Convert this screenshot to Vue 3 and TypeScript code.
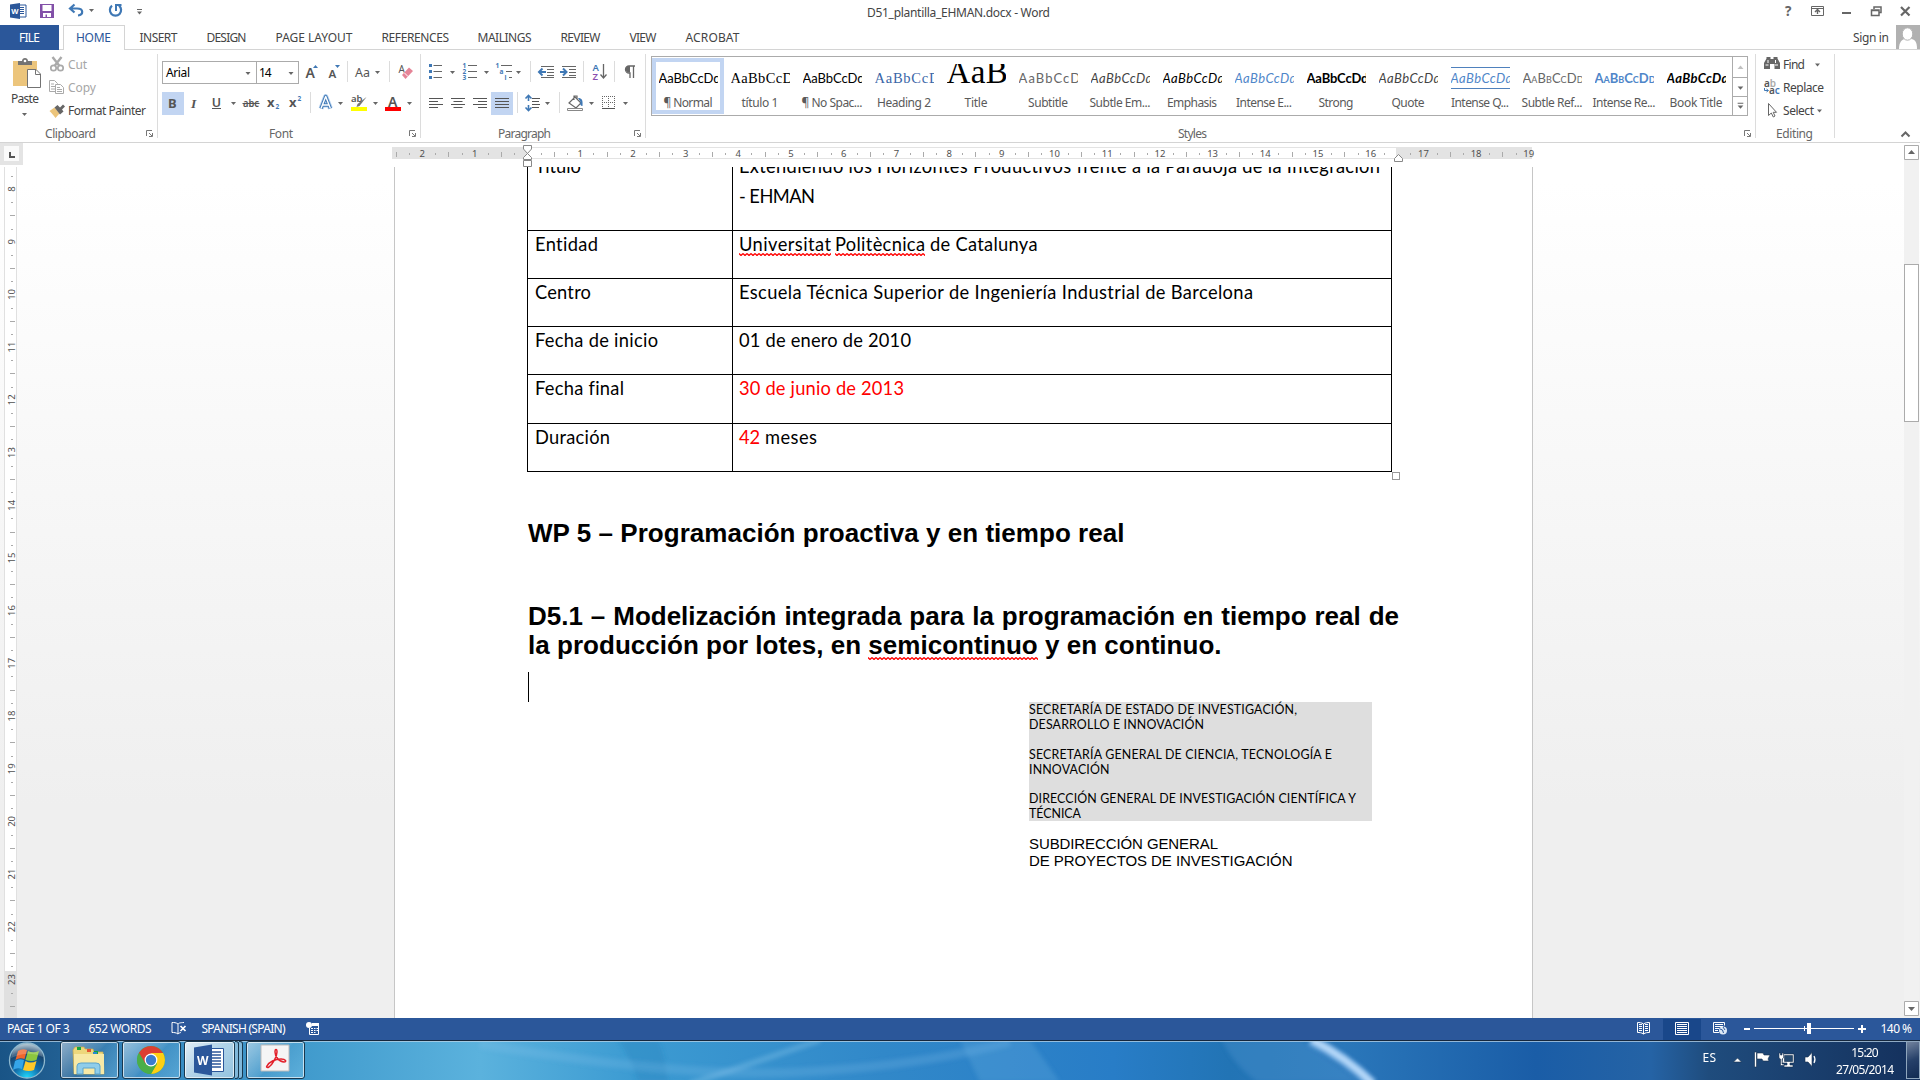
<script setup lang="ts">
import type { Directive } from 'vue'

interface Segment { text: string; width: number; gap?: number; red?: boolean; wavy?: boolean }
interface Row { label: string; width: number; lines: Segment[][]; height: number }
interface StyleItem { sample: string; name: string; kind: string; sampleWidth: number; nameWidth: number }

/* Spreads the letters of a label so that it takes exactly the given width. */
const fit = (el: HTMLElement, width: number) => {
  const natural = el.getBoundingClientRect().width
  const count = Math.max(1, (el.textContent ?? '').length - 1)
  el.style.letterSpacing = `${(width - natural) / count}px`
  el.style.width = `${width}px`
}
const vFit: Directive<HTMLElement, number> = { mounted: (el, b) => fit(el, b.value) }

const box = (x: number, y: number, w: number, h: number) => ({ viewBox: `${x} ${y} ${w} ${h}`, width: w, height: h })
const tri = (x: number, y: number) => `M${x - 2.5} ${y - 1}h5l-2.5 3z`

const tabs = [
  { name: 'INSERT', gap: 14.5, width: 38 },
  { name: 'DESIGN', gap: 29, width: 40 },
  { name: 'PAGE LAYOUT', gap: 29, width: 77 },
  { name: 'REFERENCES', gap: 29, width: 67.5 },
  { name: 'MAILINGS', gap: 28.5, width: 54 },
  { name: 'REVIEW', gap: 29, width: 40 },
  { name: 'VIEW', gap: 29, width: 27 },
  { name: 'ACROBAT', gap: 29, width: 54 },
]

const styles: StyleItem[] = [
  { sample: 'AaBbCcDd', name: '¶ Normal', kind: 'plain', sampleWidth: 62, nameWidth: 49 },
  { sample: 'AaBbCcDd', name: 'título 1', kind: 'serif', sampleWidth: 70, nameWidth: 37 },
  { sample: 'AaBbCcDd', name: '¶ No Spac...', kind: 'plain', sampleWidth: 62, nameWidth: 61 },
  { sample: 'AaBbCcDd', name: 'Heading 2', kind: 'heading', sampleWidth: 73, nameWidth: 54 },
  { sample: 'AaBb', name: 'Title', kind: 'title', sampleWidth: 78, nameWidth: 23 },
  { sample: 'AaBbCcDd', name: 'Subtitle', kind: 'subtitle', sampleWidth: 70, nameWidth: 40 },
  { sample: 'AaBbCcDd', name: 'Subtle Em...', kind: 'subtle-em', sampleWidth: 62, nameWidth: 61 },
  { sample: 'AaBbCcDd', name: 'Emphasis', kind: 'emphasis', sampleWidth: 62, nameWidth: 50 },
  { sample: 'AaBbCcDd', name: 'Intense E...', kind: 'intense-em', sampleWidth: 62, nameWidth: 56 },
  { sample: 'AaBbCcDd', name: 'Strong', kind: 'strong', sampleWidth: 62, nameWidth: 35 },
  { sample: 'AaBbCcDd', name: 'Quote', kind: 'quote', sampleWidth: 62, nameWidth: 33 },
  { sample: 'AaBbCcDd', name: 'Intense Q...', kind: 'intense-quote', sampleWidth: 62, nameWidth: 58 },
  { sample: 'AaBbCcDd', name: 'Subtle Ref...', kind: 'subtle-ref', sampleWidth: 61, nameWidth: 61 },
  { sample: 'AaBbCcDd', name: 'Intense Re...', kind: 'intense-ref', sampleWidth: 61, nameWidth: 63 },
  { sample: 'AaBbCcDd', name: 'Book Title', kind: 'book', sampleWidth: 62, nameWidth: 53 },
]

const rows: Row[] = [
  {
    label: 'Título', width: 46, height: 80,
    lines: [
      [{ text: 'Extendiendo los Horizontes Productivos frente a la Paradoja de la Integración', width: 641 }],
      [{ text: '- EHMAN', width: 76 }],
    ],
  },
  {
    label: 'Entidad', width: 63, height: 47,
    lines: [[
      { text: 'Universitat', width: 92, wavy: true },
      { text: 'Politècnica', width: 90, gap: 4, wavy: true },
      { text: 'de Catalunya', width: 107.5, gap: 5 },
    ]],
  },
  { label: 'Centro', width: 56, height: 47, lines: [[{ text: 'Escuela Técnica Superior de Ingeniería Industrial de Barcelona', width: 514 }]] },
  { label: 'Fecha de inicio', width: 123, height: 47, lines: [[{ text: '01 de enero de 2010', width: 172 }]] },
  { label: 'Fecha final', width: 89, height: 48, lines: [[{ text: '30 de junio de 2013', width: 165, red: true }]] },
  { label: 'Duración', width: 75, height: 47, lines: [[{ text: '42', width: 21, red: true }, { text: 'meses', width: 52, gap: 5 }]] },
]

const office = [
  { text: 'SECRETARÍA DE ESTADO DE INVESTIGACIÓN,', width: 268 },
  { text: 'DESARROLLO E INNOVACIÓN', width: 175 },
  { text: '', width: 0 },
  { text: 'SECRETARÍA GENERAL DE CIENCIA, TECNOLOGÍA E', width: 303 },
  { text: 'INNOVACIÓN', width: 80.5 },
  { text: '', width: 0 },
  { text: 'DIRECCIÓN GENERAL DE INVESTIGACIÓN CIENTÍFICA Y', width: 327 },
  { text: 'TÉCNICA', width: 52 },
]

const CM = 52.7
const hMarks = Array.from({ length: 87 }, (_, i) => i - 10)
  .filter((q) => q !== 0 && q !== 66)
  .map((q) => ({ q, x: 527.5 + (q * CM) / 4, label: q % 4 === 0 ? String(Math.abs(q / 4)) : '' }))
const vMarks = Array.from({ length: 64 }, (_, i) => i - 1)
  .map((q) => ({ q, y: 189 + (q * CM) / 4, label: q % 4 === 0 ? String(8 + q / 4) : '' }))
</script>

<template>
  <div class="word">
    <header class="titlebar">
      <svg v-bind="box(0, 0, 160, 25)">
        <path d="M18 5h8v12h-8z" fill="#fff" stroke="#2b579a" />
        <path d="M19 7.500h5M19 9.500h5M19 11.500h5M19 13.500h5" stroke="#2b579a" />
        <path d="M10 4.500 20 3v16l-10-1.500z" fill="#2b579a" />
        <text x="11.300" y="14" class="b" font-size="7.500" fill="#fff">W</text>
        <path d="M40 4h14v14H40z" fill="#8250a8" />
        <path d="M42.500 5h9v6h-9zM43 13h8v4h-4v-2.500h-1.500V17H43z" fill="#fff" />
        <path d="M70 8.500h7c7 0 6.500 6.500 1 7M74.500 4.500 70 8.500l4.500 4" fill="none" stroke="#3f78b5" stroke-width="2.200" />
        <path :d="tri(91.5, 10)" fill="#666" />
        <path d="M112 5.700a5.600 5.600 0 1 0 7 0" fill="none" stroke="#3f78b5" stroke-width="2.200" />
        <path d="M115 4h6.500v2H117v5h-2z" fill="#3f78b5" />
        <path d="M137 9.500h5" stroke="#666" /><path :d="tri(139.5, 12.5)" fill="#666" />
      </svg>
      <span v-fit="183" class="doc-name">D51_plantilla_EHMAN.docx - Word</span>
      <svg v-bind="box(1780, 0, 140, 25)" fill="none" stroke="#666">
        <text x="1785" y="16" class="b" font-size="13.500" fill="#666" stroke="none">?</text>
        <path d="M1811.500 6.500h12v9h-12zM1811.500 8.500h12" /><path d="M1817.500 14v-4M1815 12l2.500-2.500 2.500 2.500" stroke-width="1.400" />
        <path d="M1842 13h9" stroke-width="2" />
        <path d="M1874 9V7h7v5.500h-2M1871.500 10h7.500v5.500h-7.500zM1871.500 10.500h7.500" stroke-width="1.500" />
        <path d="m1901 7 8.500 8.500M1909.500 7l-8.500 8.500" stroke-width="2.200" />
      </svg>
    </header>

    <nav class="tabs">
      <div class="file"><span v-fit="21">FILE</span></div>
      <div class="home"><span v-fit="35">HOME</span></div>
      <span v-for="t in tabs" :key="t.name" v-fit="t.width" :style="{ marginLeft: t.gap + 'px' }">{{ t.name }}</span>
      <span v-fit="36" class="sign-in">Sign in</span>
      <svg v-bind="box(1896, 25, 24, 24)">
        <path d="M1896 25h24v24h-24z" fill="#b1b1b1" />
        <path d="M1899 49c0-7 3-9.500 6-10h6c4 .5 6 3 6 10z" fill="#fff" />
        <ellipse cx="1907.500" cy="34" rx="5.300" ry="6.200" fill="#fff" stroke="#b1b1b1" />
      </svg>
    </nav>

    <section class="ribbon">
      <div class="group clipboard">
        <div class="body">
          <div class="paste">
            <svg v-bind="box(0, 52, 48, 38)">
              <path d="M13 61h24v25H13z" fill="#ecc57c" />
              <path d="M18 65v-4h4c0-4 6-4 6 0h4v4z" fill="#737373" /><circle cx="25" cy="61" r="1.300" fill="#fff" />
              <path d="M27.500 69.500H36l4.500 4.500v13.500h-13z" fill="#fff" stroke="#737373" /><path d="M35.500 69.500v5h5" fill="none" stroke="#737373" />
            </svg>
            <span v-fit="28">Paste</span>
            <svg v-bind="box(0, 108, 48, 12)"><path :d="tri(24.5, 114)" fill="#666" /></svg>
          </div>
          <div class="stack">
            <div class="off">
              <svg v-bind="box(48, 54, 20, 22)" fill="none" stroke="#aaa" stroke-width="1.700"><path d="m52.500 57 7 9M61.500 57l-7 9" stroke-width="2.400" /><circle cx="53.500" cy="68" r="2.700" /><circle cx="60.500" cy="68" r="2.700" /></svg>
              <span v-fit="19">Cut</span>
            </div>
            <div class="off">
              <svg v-bind="box(48, 77, 20, 22)" fill="#fff" stroke="#aaa"><path d="M49.500 80.500h5l3 3v8h-8zM51 84h3M51 86.500h5M51 89h5" /><path d="M55.500 84.500h5l3 3v6h-8zM57 87.500h3M57 89.500h5M57 91.500h5" /></svg>
              <span v-fit="28">Copy</span>
            </div>
            <div>
              <svg v-bind="box(48, 99, 20, 22)"><path d="m49.500 110 5-3.500 5 6-4 4.500c-2-3-4-5-6-7z" fill="#ecc57c" /><path d="m54.500 106.500 3-2.500 2.500 2.500 3-3 2 2-3 3 1.500 2-3.500 3z" fill="#666" /></svg>
              <span v-fit="78">Format Painter</span>
            </div>
          </div>
        </div>
        <footer><span v-fit="51" style="margin-left: 45px">Clipboard</span><svg class="launch" v-bind="box(0, 0, 8, 8)"><path d="M.5 6V.5H6M3 3l3 3M6.500 3v3.500H3" fill="none" stroke="#777" /></svg></footer>
      </div>

      <div class="group font">
        <div class="line first">
          <div class="combo family"><span v-fit="24">Arial</span><svg v-bind="box(243, 61, 11, 20)"><path :d="tri(248, 72)" fill="#666" /></svg></div>
          <div class="combo size"><span v-fit="12.5">14</span><svg v-bind="box(286, 61, 11, 20)"><path :d="tri(291, 72)" fill="#666" /></svg></div>
          <svg v-bind="box(299, 61, 24, 23)"><text x="305.500" y="78" font-size="14" class="m">A</text><path d="m313 68 2.500-3 2.500 3z" fill="#3f78b5" /></svg>
          <svg v-bind="box(323, 61, 24, 23)"><text x="328.500" y="78" font-size="11.500" class="m">A</text><path d="M335 65h5l-2.500 3z" fill="#3f78b5" /></svg>
          <i class="sep" />
          <svg v-bind="box(348, 61, 41, 23)"><text x="355" y="76.500" font-size="13" textLength="15" lengthAdjust="spacingAndGlyphs">Aa</text><path :d="tri(377.5, 72)" fill="#666" /></svg>
          <i class="sep" />
          <svg v-bind="box(390, 61, 28, 23)"><text x="398.500" y="73" font-size="10">A</text><path d="m401.500 73 3 4M402 75l7-7.500 4 3.500-7.500 8z" fill="#e58497" /><path d="m404 72.500 4 4" stroke="#fff" /></svg>
        </div>
        <div class="line second">
          <svg class="on" v-bind="box(162, 92, 22, 23)"><text x="168" y="107.500" font-size="13" class="b">B</text></svg>
          <svg v-bind="box(184, 92, 22, 23)"><text x="191" y="107.500" font-size="13.500" font-style="italic" font-weight="700" font-family="Liberation Serif, serif">I</text></svg>
          <svg v-bind="box(206, 92, 35, 23)"><text x="211.800" y="106.500" font-size="12.500" class="m">U</text><path d="M212 108.500h9" stroke="#555" /><path :d="tri(233.5, 103)" fill="#666" /></svg>
          <svg v-bind="box(241, 92, 22, 23)"><text x="243" y="107" font-size="11" class="m" textLength="16" lengthAdjust="spacingAndGlyphs">abc</text><path d="M242.500 103.500h17" stroke="#555" /></svg>
          <svg v-bind="box(263, 92, 22, 23)"><text x="267" y="107" font-size="13" class="b">x</text><text x="275.500" y="109" font-size="6.500" class="blue b">2</text></svg>
          <svg v-bind="box(285, 92, 25, 23)"><text x="289" y="107" font-size="13" class="b">x</text><text x="297.500" y="101" font-size="6.500" class="blue b">2</text></svg>
          <i class="sep" />
          <svg v-bind="box(311, 92, 36, 23)" stroke-linejoin="round" fill="none"><path d="m321 108.500 4.700-12 4.700 12M322.700 105h6" stroke="#b7d2ef" stroke-width="5" /><path d="m321 108.500 4.700-12 4.700 12M322.700 105h6" stroke="#3f78b5" stroke-width="3.400" /><path d="m321 108.500 4.700-12 4.700 12M322.700 105h6" stroke="#fff" stroke-width="1.400" /><path :d="tri(340.5, 103)" fill="#666" /></svg>
          <svg v-bind="box(347, 92, 35, 23)"><text x="351" y="101.500" font-size="9.500" class="m">ab</text><path d="m366.500 97-7 9-3 1 1-3z" fill="#777" /><path d="M351 107h16v4h-16z" fill="#ff0" /><path :d="tri(375.500, 103)" fill="#666" /></svg>
          <svg v-bind="box(382, 92, 36, 23)"><text x="388" y="106.500" font-size="14" class="m">A</text><path d="M385 107h16v4h-16z" fill="red" /><path :d="tri(409.500, 103)" fill="#666" /></svg>
        </div>
        <footer><span v-fit="24" style="margin-left: 111px">Font</span><svg class="launch" v-bind="box(0, 0, 8, 8)"><path d="M.5 6V.5H6M3 3l3 3M6.500 3v3.500H3" fill="none" stroke="#777" /></svg></footer>
      </div>

      <div class="group paragraph">
        <div class="line first">
          <svg v-bind="box(421, 61, 38, 23)"><path d="M433.500 65.500H442M433.500 71.500H442M433.500 77.500H442" stroke="#666" /><path d="M429 64h3v3h-3zM429 70h3v3h-3zM429 76h3v3h-3z" fill="#3f78b5" /><path :d="tri(452.500, 72)" fill="#666" /></svg>
          <svg v-bind="box(459, 61, 34, 23)"><path d="M468 65.500h9M468 71.500h9M468 77.500h9" stroke="#666" /><g font-size="6.500" class="nums"><text x="462.500" y="68">1</text><text x="462.500" y="74">2</text><text x="462.500" y="80">3</text></g><path :d="tri(486.500, 72)" fill="#666" /></svg>
          <svg v-bind="box(493, 61, 37, 23)"><path d="M501 65.500h11M506 71.500h6M509 77.500h3" stroke="#666" /><g font-size="6.500" class="nums"><text x="495.500" y="68">1</text><text x="499.500" y="74">a</text><text x="504.500" y="80">i</text></g><path :d="tri(518.500, 72)" fill="#666" /></svg>
          <i class="sep" />
          <svg v-bind="box(531, 61, 26, 23)"><path d="M541 66.500h13M547 69.500h7M547 72.500h7M547 75.500h7M541 77.500h13" stroke="#666" /><path d="M546 72h-6M542.500 68.500l-3.500 3.500 3.500 3.500" fill="none" stroke="#3f78b5" stroke-width="2" /></svg>
          <svg v-bind="box(557, 61, 26, 23)"><path d="M562 66.500h14M569 69.500h7M569 72.500h7M569 75.500h7M562 77.500h14" stroke="#666" /><path d="M560 72h6M563 68.500l3.500 3.500-3.500 3.500" fill="none" stroke="#3f78b5" stroke-width="2" /></svg>
          <i class="sep" />
          <svg v-bind="box(584, 61, 30, 23)"><text x="592.500" y="71" font-size="9.500" class="blue m">A</text><text x="592.500" y="79.500" font-size="9.500" class="m" style="fill: #8a4fb0">Z</text><path d="M603.500 64v14M600.500 74.500l3 3.500 3-3.500" fill="none" stroke="#666" stroke-width="1.300" /></svg>
          <i class="sep" />
          <svg v-bind="box(615, 61, 29, 23)"><path d="M635 66h-6a3.500 3.500 0 0 0 0 7h1v5M633.500 66v12" fill="none" stroke="#666" stroke-width="1.300" /><path d="M630 66h-1.500a3.300 3.300 0 0 0 0 6.500h1.500z" fill="#666" /></svg>
        </div>
        <div class="line second">
          <svg v-bind="box(425, 92, 22, 23)" stroke="#555"><path d="M429 98.500h14M429 101.500h9M429 104.500h14M429 107.500h9" /></svg>
          <svg v-bind="box(447, 92, 22, 23)" stroke="#555"><path d="M451 98.500h14M453.500 101.500h9M451 104.500h14M453.500 107.500h9" /></svg>
          <svg v-bind="box(469, 92, 22, 23)" stroke="#555"><path d="M473 98.500h14M478 101.500h9M473 104.500h14M478 107.500h9" /></svg>
          <svg class="on" v-bind="box(491, 92, 22, 23)" stroke="#555"><path d="M495 98.500h14M495 101.500h14M495 104.500h14M495 107.500h14" /></svg>
          <i class="sep gap" />
          <svg v-bind="box(518, 92, 41, 23)"><path d="M532 98.500h8M532 101.500h7M532 104.500h8M532 107.500h7" stroke="#555" /><path d="M528.500 95v6M528.500 105v6M525.500 98.500l3-3 3 3M525.500 107.500l3 3 3-3" fill="none" stroke="#3f78b5" stroke-width="1.600" /><path :d="tri(547.500, 103)" fill="#666" /></svg>
          <i class="sep" />
          <svg v-bind="box(560, 92, 38, 23)"><path d="m569 103 6-6 6 6-5 5zM574 100v-4h3v4" fill="#fff" stroke="#666" stroke-width="1.200" /><path d="M578 98c4 0 5 2 4.500 8-2 0-3-2-2-4z" fill="#3f78b5" /><path d="M567.500 108.500h15v2h-15z" fill="#fff" stroke="#888" /><path :d="tri(591.500, 103)" fill="#666" /></svg>
          <svg v-bind="box(598, 92, 40, 23)"><path d="M602 96.500h13M602 102.500h13M602.500 96v13M608.500 96v13M614.500 96v13" stroke="#666" stroke-dasharray="1 1" /><path d="M602 108.500h13" stroke="#555" /><path :d="tri(625.500, 103)" fill="#666" /></svg>
        </div>
        <footer><span v-fit="53" style="margin-left: 77px">Paragraph</span><svg class="launch" v-bind="box(0, 0, 8, 8)"><path d="M.5 6V.5H6M3 3l3 3M6.500 3v3.500H3" fill="none" stroke="#777" /></svg></footer>
      </div>

      <div class="group styles">
        <div class="gallery">
          <div v-for="(s, i) in styles" :key="s.name" class="style" :class="{ picked: i === 0 }">
            <div class="sample" :class="s.kind"><span v-fit="s.sampleWidth">{{ s.sample }}</span></div>
            <span v-fit="s.nameWidth" class="style-name">{{ s.name }}</span>
          </div>
          <div class="arrows">
            <svg v-bind="box(1733, 57, 14, 20)"><path d="m1737.500 69 3-3.500 3 3.500z" fill="#c0c0c0" /></svg>
            <svg v-bind="box(1733, 77, 14, 19)"><path d="M1737.500 86h6l-3 3.500z" fill="#666" /></svg>
            <svg v-bind="box(1733, 96, 14, 19)"><path d="M1737.500 105h6l-3 3.500zM1737.500 102h6v1h-6z" fill="#666" /></svg>
          </div>
        </div>
        <footer><span v-fit="29" style="margin-left: 532px">Styles</span><svg class="launch" v-bind="box(0, 0, 8, 8)"><path d="M.5 6V.5H6M3 3l3 3M6.500 3v3.500H3" fill="none" stroke="#777" /></svg></footer>
      </div>

      <div class="group editing">
        <div class="stack">
          <div>
            <svg v-bind="box(1756, 54, 26, 22)"><path d="M1763 69v-6l2.500-4.500V57h4v2h3v-2h4v1.500l2.500 4.500v6h-5.500v-5h-4.500v5z" fill="#666" /><path d="M1764.500 65h3M1774 65h3M1767 60v3M1774.500 60v3" stroke="#fff" /></svg>
            <span v-fit="22">Find</span><svg v-bind="box(1805, 54, 20, 22)"><path :d="tri(1817.5, 64.5)" fill="#666" /></svg>
          </div>
          <div>
            <svg v-bind="box(1756, 77, 26, 22)"><text x="1763" y="87" font-size="10" class="m">a<tspan style="fill: #aaa">b</tspan></text><text x="1768" y="94" font-size="10" class="m">a<tspan style="fill: #3f78b5">c</tspan></text><path d="M1763.500 88v2.500h3.500M1765.500 89l2 1.500-2 1.500" fill="none" stroke="#3f78b5" /></svg>
            <span v-fit="41">Replace</span>
          </div>
          <div>
            <svg v-bind="box(1756, 100, 26, 22)"><path d="M1767.500 103.500v12l2.800-2.500 2 4 1.700-1-1.800-3.700h3.300z" fill="#fff" stroke="#666" /></svg>
            <span v-fit="31">Select</span><svg v-bind="box(1813, 100, 12, 22)"><path :d="tri(1818.5, 110.5)" fill="#666" /></svg>
          </div>
        </div>
        <footer><span v-fit="37" style="margin-left: 20px">Editing</span></footer>
      </div>
      <svg class="collapse" v-bind="box(1900, 128, 11, 12)"><path d="m1901.500 136.500 4-4 4 4" fill="none" stroke="#666" stroke-width="2" /></svg>
    </section>

    <div class="ruler-bar">
      <svg v-bind="box(0, 143, 392, 24)"><path d="M0 143h23v22H0z" fill="#e4e4e4" /><path d="M4 146h15v15H4z" fill="#fafafa" /><path d="M10 152v5h5" fill="none" stroke="#555" stroke-width="2" /></svg>
      <svg v-bind="box(392, 143, 1145, 24)">
        <path d="M392 147h1140v12H392z" fill="#e3e3e3" />
        <path d="M527 148h869v10H527z" fill="#fff" />
        <template v-for="m in hMarks" :key="m.q">
          <text v-if="m.label" :x="m.x" y="157" text-anchor="middle" font-size="9.500">{{ m.label }}</text>
          <path v-else :d="m.q % 2 ? `M${Math.round(m.x)} 153h1v2h-1z` : `M${Math.round(m.x)} 152h1v5h-1z`" fill="#aaa" />
        </template>
        <path d="M523.500 145.500h8v3.500l-4 4.500-4-4.500zM527.500 153.500l4 4v2h-8v-2zM523.500 160.500h8v6h-8z" fill="#fff" stroke="#888" />
        <path d="m1398.500 154.500 4 4v3h-8v-3z" fill="#fff" stroke="#888" />
      </svg>
    </div>

    <div class="workspace">
      <svg v-bind="box(0, 165, 20, 853)" class="v-ruler">
        <path d="M4 167h13v851H4z" fill="#e0e0e0" /><path d="M5 167h11v804H5z" fill="#fff" />
        <template v-for="m in vMarks" :key="m.q">
          <text v-if="m.label" :transform="`translate(14.700 ${m.y}) rotate(-90)`" text-anchor="middle" font-size="9.500">{{ m.label }}</text>
          <path v-else-if="m.y > 168" :d="m.q % 2 ? `M11 ${Math.round(m.y)}h2v1h-2z` : `M10 ${Math.round(m.y)}h5v1h-5z`" fill="#aaa" />
        </template>
      </svg>

      <main class="page">
        <div class="table">
          <div v-for="r in rows" :key="r.label" class="row" :class="{ tall: r.lines.length > 1 }" :style="{ height: r.height + 'px' }">
            <div class="cell label"><span v-fit="r.width">{{ r.label }}</span></div>
            <div class="cell">
              <div v-for="(line, i) in r.lines" :key="i" class="text-line">
                <span v-for="s in line" :key="s.text" v-fit="s.width" :class="{ red: s.red, wavy: s.wavy }" :style="{ marginLeft: (s.gap ?? 0) + 'px' }">{{ s.text }}</span>
              </div>
            </div>
          </div>
          <i class="end-mark" />
        </div>
        <h1><span v-fit="596.5">WP 5 – Programación proactiva y en tiempo real</span></h1>
        <h2>
          <span class="justified">D5.1 – Modelización integrada para la programación en tiempo real de</span>
          <span class="last">la producción por lotes, en <span class="wavy">semicontinuo</span> y en continuo.</span>
        </h2>
        <i class="cursor" />
        <div class="office">
          <div v-for="(o, i) in office" :key="i" class="office-line"><span v-if="o.text" v-fit="o.width">{{ o.text }}</span></div>
        </div>
        <div class="sub">
          <div><span v-fit="189">SUBDIRECCIÓN GENERAL</span></div>
          <div><span v-fit="263.500">DE PROYECTOS DE INVESTIGACIÓN</span></div>
        </div>
      </main>

      <div class="scroll">
        <svg v-bind="box(0, 0, 15, 15)"><path d="M.5.5h14v14H.5z" fill="#fff" stroke="#ababab" /><path d="m4 9 3.500-4L11 9z" fill="#666" /></svg>
        <i class="thumb" />
        <svg v-bind="box(0, 0, 15, 15)"><path d="M.5.5h14v14H.5z" fill="#fff" stroke="#ababab" /><path d="m4 6 3.500 4L11 6z" fill="#666" /></svg>
      </div>
    </div>

    <div class="status">
      <span v-fit="62.5" style="margin-left: 7px">PAGE 1 OF 3</span>
      <span v-fit="63" style="margin-left: 19px">652 WORDS</span>
      <svg v-bind="box(151.5, 1018, 50, 22)" fill="none" stroke="#fff"><path d="M177.500 1024c-2-1.500-4-1.500-6-1.500v10c2 0 4 0 6 1.500 1-1 2-1.300 3-1.500M177.500 1024v10M177.500 1024c1-1 2-1.300 6-1.500" /><path d="m180 1026 5 5M185 1026l-5 5" stroke-width="1.700" /></svg>
      <span v-fit="84">SPANISH (SPAIN)</span>
      <svg v-bind="box(285, 1018, 50, 22)"><path d="M308.500 1028v6.500h9v-10h-5" fill="none" stroke="#fff" /><path d="M311 1023h7v3h-7z" fill="#fff" /><path d="M310 1028.500h2M313 1028.500h1.500M315.500 1028.500h1.500M310 1030.500h2M313 1030.500h1.500M315.500 1030.500h1.500M310 1032.500h2M313 1032.500h1.500" stroke="#fff" /><circle cx="308" cy="1025" r="3" fill="#fff" /></svg>
      <svg class="views" v-bind="box(1625, 1018, 255.5, 22)">
        <path d="M1663 1019h38v21h-38z" fill="#19478a" />
        <g fill="none" stroke="#fff">
          <path d="M1643.500 1024c-2-1.500-4-1.500-6-1.500v10c2 0 4 0 6 1.500 2-1.500 4-1.500 6-1.500v-10c-2 0-4 0-6 1.500zv10M1639 1024.500h3M1639 1026.500h3M1639 1028.500h3M1639 1030.500h3M1645 1024.500h3M1645 1026.500h3M1645 1028.500h3M1645 1030.500h3" />
          <path d="M1675.500 1022.500h13v12h-13zM1677 1024.500h10M1677 1026.500h10M1677 1028.500h10M1677 1030.500h10M1677 1032.500h10" />
          <path d="M1719 1032.500h-5.500v-10h11v3M1715 1024.500h8M1715 1026.500h8M1715 1028.500h4M1715 1030.500h3" />
        </g>
        <circle cx="1723" cy="1030.500" r="4" fill="#dce8f7" /><path d="m1720 1029 2.500 1 1 3M1723 1027l2 3" stroke="#2b579a" fill="none" />
        <path d="M1744 1028h6v2h-6zM1858 1028h8v2h-8zM1861 1025h2v8h-2zM1754 1028h100v1h-100zM1804 1026h1v5h-1zM1807 1023h4v11h-4z" fill="#fff" />
      </svg>
      <span v-fit="31.5">140 %</span>
    </div>

    <div class="taskbar">
      <svg class="aero" v-bind="box(0, 1040, 1920, 40)">
        <defs>
          <linearGradient id="sky"><stop offset="0" stop-color="#195486" /><stop offset=".03" stop-color="#215f92" /><stop offset=".07" stop-color="#3487bf" /><stop offset=".16" stop-color="#419bcd" /><stop offset=".25" stop-color="#5bb2dd" /><stop offset=".33" stop-color="#3c9bd2" /><stop offset=".46" stop-color="#3188c9" /><stop offset=".58" stop-color="#287dc7" /><stop offset=".64" stop-color="#2274b5" /><stop offset=".7" stop-color="#2a77ba" /><stop offset=".8" stop-color="#1a5da7" /><stop offset=".86" stop-color="#2563a5" /><stop offset=".89" stop-color="#1f4c7d" /><stop offset="1" stop-color="#14305c" /></linearGradient>
          <filter id="soft" x="-20%" y="-50%" width="140%" height="200%"><feGaussianBlur stdDeviation="2" /></filter>
        </defs>
        <path d="M0 1040h1920v40H0z" fill="url(#sky)" />
        <g filter="url(#soft)">
          <path d="M618 1040h40q8 18 10 42h-30q-8-26-20-42z" fill="#2684bd" opacity=".35" />
          <path d="M480 1044q200 34 320 28t210-30" fill="none" stroke="#8fcaf0" stroke-width="9" opacity=".2" />
          <path d="M690 1084q60-20 130-44" fill="none" stroke="#9bd0f3" stroke-width="6" opacity=".3" />
          <path d="M960 1040h70l30 42h-80z" fill="#6fb2e4" opacity=".25" />
          <path d="M1222 1040h80l60 42h-105q-24-18-35-42z" fill="#559ad3" opacity=".3" />
        </g>
        <path d="M1310 1040q36 18 62 44" fill="none" stroke="#7db4ea" stroke-width="11" opacity=".6" filter="url(#soft)" />
        <path d="M1312 1040q35 18 61 44" fill="none" stroke="#b7d9f9" stroke-width="7" filter="url(#soft)" />
        <path d="M0 1040h1920v1H0z" fill="#15273d" /><path d="M0 1041h1920v1H0z" fill="#b9d3e6" opacity=".75" />
      </svg>
      <svg v-bind="box(0, 1040, 60, 40)">
        <defs><radialGradient id="orb" cx=".5" cy="1" r="1"><stop offset="0" stop-color="#20dcff" /><stop offset=".4" stop-color="#126aa8" /><stop offset=".75" stop-color="#17436c" /><stop offset="1" stop-color="#b5ccd8" /></radialGradient></defs>
        <circle cx="27" cy="1060.500" r="17.500" fill="url(#orb)" stroke="#8fb9cf" stroke-width="1.300" />
        <path d="M18 1051q4-3 9-1l-2.500 9q-5-2-9 1z" fill="#f0672c" /><path d="M28 1051q5 2.500 11 0l-2.500 9q-5 2-11 0z" fill="#8cc63e" />
        <path d="M15 1061q4-3 9-1l-2 9q-5-2-9 1z" fill="#35a5e8" /><path d="M25.500 1061q5 3 11 0l-2.500 9q-5 2-11 0z" fill="#ffc829" />
        <path d="M11 1058q2-13 16-14 14 1 16 13-15-7-32 1z" fill="#fff" opacity=".2" />
      </svg>
      <div class="task">
        <svg v-bind="box(70, 1042, 38, 36)"><path d="m73 1050 2-3h9l1 2h8l1 3h9l1 22H74z" fill="#edd77c" stroke="#c8a94b" stroke-width=".7" /><path d="M77 1047h4v3h-4zM94 1051h4v3h-4z" fill="#16a53d" /><path d="M87 1049h4v3h-4z" fill="#e45532" /><path d="M93 1052h4v2h-4z" fill="#288bd0" /><path d="M74 1054h30v20H74z" fill="#f7e9a6" /><path d="M77 1074v-8q0-3 4-3h15q4 0 4 3v8h-5v-6H83v6z" fill="#8fcdea" stroke="#5ba3cc" /></svg>
      </div>
      <div class="task">
        <svg v-bind="box(132, 1042, 38, 36)"><circle cx="151" cy="1060" r="14" fill="#4aae49" /><path d="M151 1060 138.900 1053A14 14 0 0 1 163.100 1053z" fill="#dc3f32" /><path d="M151 1053h12.100A14 14 0 0 1 151 1074l6-10z" fill="#fdcf14" /><path d="m138.900 1053 6.500 11 5.600-4v-7z" fill="#dc3f32" /><path d="m139 1053 6 10 6 3.500 5-3-5 10.500A14 14 0 0 1 139 1053z" fill="#4aae49" /><circle cx="151" cy="1060" r="6.400" fill="#fff" /><circle cx="151" cy="1060" r="5.200" fill="#3a7cce" /></svg>
      </div>
      <div class="task active">
        <svg v-bind="box(190, 1042, 38, 36)"><path d="M209 1048.500h14.500v23H209z" fill="#fff" stroke="#2b579a" /><path d="M212 1052h9M212 1055h9M212 1058h9M212 1061h9M212 1064h9M212 1067h9" stroke="#2b579a" stroke-width="1.300" /><path d="m194 1047.500 18-3v31l-18-3z" fill="#2b579a" /><text x="197" y="1064.500" class="b" font-size="12.500" style="fill: #fff" textLength="11.500" lengthAdjust="spacingAndGlyphs">W</text></svg>
      </div>
      <i class="edge" /><i class="edge" />
      <div class="task acrobat">
        <svg v-bind="box(256, 1042, 38, 36)"><path d="M261 1045h28v26h-28z" fill="#f5f5f5" stroke="#bbb" /><path d="M267 1066c2-4 8-7 14-7 5 0 6 3 3 3-5 0-9-6-9-10 0-3.500 2-3.500 2 0 0 5-5 13-8 15-2 1-3 0-2-1z" fill="none" stroke="#e3212b" stroke-width="1.500" /></svg>
      </div>
      <span v-fit="13.5" class="lang">ES</span>
      <svg v-bind="box(1716, 1041, 110, 39)" fill="#fff" stroke="#17304f" stroke-width=".6">
        <path d="m1733.500 1063 4-4 4 4z" />
        <path d="M1754.500 1053h2v15h-2zM1757 1054h6l1 2h6l-2 4 1 2h-6l-1-2h-5z" />
        <path d="M1783 1055h11v9h-4v2h3v2h-9v-2h3v-2h-5z" /><path d="M1784.500 1056.500h8v6h-8z" fill="#23486f" /><path d="M1779 1054h1.500v2h1.500v-2h1.500v5l-1.500 1v5h2v1.500h-3.500v-6.500l-1.500-1z" />
        <path d="M1805 1058h3l4-4.500v14l-4-4.500h-3z" /><path d="M1814 1057q2 3.500 0 7" fill="none" stroke="#fff" stroke-width="1.200" />
      </svg>
      <div class="clock"><span v-fit="27.500">15:20</span><span v-fit="58">27/05/2014</span></div>
      <i class="desktop" />
    </div>
  </div>
</template>

<style>
body { margin: 0; background: #fff; overflow: hidden; }
</style>

<style scoped>
.word { width: 1920px; height: 1080px; display: flex; flex-direction: column; overflow: hidden; font-family: "Noto Sans", "Open Sans", sans-serif; font-size: 12px; color: #444; font-variant-ligatures: none; background: #fff; }
.word * { box-sizing: border-box; }
span { display: inline-block; white-space: pre; flex: none; }
svg { display: block; flex: none; }
svg text { fill: #555; }
svg .b { font-weight: 700; }
svg .m { font-weight: 600; }
svg .blue, svg .nums text { fill: #3f78b5; }
svg .nums text { font-weight: 700; }
.titlebar svg text:first-of-type { fill: #fff; }
.titlebar svg:last-child text { fill: #666; }

.titlebar { height: 25px; display: flex; flex: none; line-height: 25px; }
.doc-name { margin-left: 707px; }
.titlebar svg:last-child { margin-left: auto; }

.tabs { height: 25px; flex: none; display: flex; line-height: 25px; border-bottom: 1px solid #d4d4d4; }
.file { width: 59px; height: 25px; background: #2b579a; color: #fff; padding-left: 19px; }
.home { width: 62px; height: 25px; margin-left: 4px; border: 1px solid #d4d4d4; border-bottom: 0; background: #fff; color: #2b579a; padding-left: 12px; line-height: 24px; }
.sign-in { margin-left: auto; margin-right: 7px; }

.ribbon { height: 93px; flex: none; display: flex; border-bottom: 1px solid #d4d4d4; }
.group { height: 84px; margin-top: 4px; border-right: 1px solid #dcdcdc; display: flex; flex-direction: column; }
.group footer { display: flex; align-items: center; margin-top: auto; height: 8px; line-height: 8px; color: #666; padding-right: 3px; }
.launch { margin-left: auto; }
.clipboard { width: 158px; }
.body { display: flex; margin-top: -2px; }
.paste { width: 48px; }
.paste span { margin-left: 11px; line-height: 18px; }
.stack { display: flex; flex-direction: column; gap: 1px; }
.stack > div { display: flex; line-height: 22px; }
.clipboard .stack { margin-top: 2px; }
.off { color: #a6a6a6; }
.font { width: 263px; }
.paragraph { width: 225px; }
.line { display: flex; height: 23px; }
.first { margin-top: 7px; }
.second { margin-top: 8px; }
.font .line { padding-left: 4px; }
.paragraph .second { padding-left: 4px; }
.on { background: #c2d5f2; }
.sep { width: 1px; height: 21px; background: #dcdcdc; flex: none; }
.gap { margin-left: 4px; }
.combo { height: 23px; border: 1px solid #ababab; display: flex; justify-content: space-between; line-height: 21px; padding: 0 2px 0 3px; color: #000; }
.family { width: 95px; }
.size { width: 42px; border-left: 0; padding: 0 1px 0 2px; }

.styles { width: 1110px; padding-left: 5px; }
.styles footer { margin-left: -5px; }
.gallery { width: 1097px; height: 60px; margin-top: 2px; border: 1px solid #ababab; display: flex; }
.style { width: 72px; height: 56px; margin-top: 1px; flex: none; display: flex; flex-direction: column; align-items: center; color: #5a5a5a; }
.picked { box-shadow: inset 0 0 0 4px #c2d5f2; }
.sample { width: 59px; height: 28px; margin-top: 6px; line-height: 28px; overflow: hidden; font-family: Lato, sans-serif; font-size: 13px; color: #000; }
.sample span { vertical-align: top; }
.style-name { line-height: 18px; margin-top: 2px; }
.sample.serif, .sample.heading { font-family: "Liberation Serif", serif; font-size: 14.5px; }
.sample.heading { color: #3a66a7; }
.sample.title { font-family: "Liberation Serif", serif; font-size: 33px; line-height: 17px; }
.sample.subtitle { color: #666; }
.sample.subtle-em, .sample.quote { font-style: italic; color: #444; }
.sample.emphasis { font-style: italic; }
.sample.intense-em { font-style: italic; color: #4f86c9; }
.sample.strong { font-weight: 700; }
.sample.intense-quote { font-style: italic; color: #4f86c9; height: 22px; line-height: 20px; margin: 9px 0 3px; border-top: 1px solid #4f81bd; border-bottom: 1px solid #4f81bd; }
.sample.subtle-ref { font-variant-caps: small-caps; color: #666; }
.sample.intense-ref { font-variant-caps: small-caps; color: #4f86c9; font-weight: 700; }
.sample.book { font-weight: 700; font-style: italic; }
.arrows { margin-left: auto; border-left: 1px solid #ababab; width: 15px; }
.arrows svg + svg { border-top: 1px solid #ababab; }

.editing { width: 79px; }
.editing .stack { margin-left: 1px; }
.collapse { margin: 78px 0 0 65px; }

.ruler-bar { height: 22px; flex: none; display: flex; position: relative; z-index: 2; }
.ruler-bar text, .v-ruler text { fill: #505050; }

.workspace { height: 853px; flex: none; display: flex; background: linear-gradient(#fff 0, #fff 2%, #efefef 75%, #efefef); }
.page { width: 1139px; height: 851px; margin: 2px 0 0 374px; border: solid #c6c6c6; border-width: 0 1px; background: #fff; overflow: hidden; color: #000; display: flex; flex-direction: column; padding-left: 132px; }
.table { width: 865px; margin-top: -17px; border: 1px solid #000; border-top: 0; flex: none; font-family: Lato, sans-serif; font-size: 18.3px; line-height: 24px; position: relative; }
.row { display: flex; box-sizing: content-box !important; border-bottom: 1px solid #000; }
.row:nth-child(6) { border-bottom: 0; }
.tall { line-height: 30px; }
.cell { padding: 1px 0 0 6px; }
.label { width: 205px; border-right: 1px solid #000; padding-left: 7px; }
.text-line { display: flex; }
.red { color: #f00; }
.wavy { background: url("data:image/svg+xml,%3Csvg xmlns='http://www.w3.org/2000/svg' width='4' height='3'%3E%3Cpath d='M0 .5l2 2 2-2' fill='none' stroke='red' stroke-width='1.3'/%3E%3C/svg%3E") 0 100% repeat-x; }
.text-line .wavy { height: 24px; }
.end-mark { position: absolute; right: -9px; bottom: -9px; width: 8px; height: 8px; border: 1px solid #999; background: #fff; }
h1, h2 { margin: 0; font: 700 26px/30px "Liberation Sans", sans-serif; flex: none; }
h1 { margin-top: 46px; padding-left: 1px; }
h2 { margin-top: 54px; line-height: 29px; height: 57px; padding-left: 1px; display: flex; flex-direction: column; }
.justified { width: 871px; white-space: normal; text-align-last: justify; height: 29px; }
.last { letter-spacing: .03px; }
h2 .wavy { display: inline; }
.cursor { width: 1px; height: 30px; margin-top: 13px; background: #000; margin-left: 1px; flex: none; }
.office { width: 343px; height: 119px; flex: none; margin-left: 502px; background: #dedede; font-family: Lato, sans-serif; font-size: 12.4px; line-height: 15px; }
.office-line { height: 14.9px; transform: translateY(-.5px); }
.sub { margin: 14px 0 0 502px; font: 15px/17px "Liberation Sans", sans-serif; }
.sub div { height: 17px; }
.scroll { width: 15px; margin: -20px 1px 2px auto; background: #f1f1f1; display: flex; flex-direction: column; position: relative; z-index: 3; }
.thumb { height: 158px; margin-top: 104px; background: #fff; border: 1px solid #ababab; }
.scroll svg:last-child { margin-top: auto; }

.status { height: 22px; flex: none; background: #2b579a; color: #fff; display: flex; line-height: 22px; }
.views { margin-left: auto; }
.status span:last-child { margin-right: 8px; }

.taskbar { height: 40px; flex: none; display: flex; position: relative; color: #fff; }
.aero { position: absolute; left: 0; top: 0; }
.taskbar > :not(.aero) { position: relative; }
.task { width: 59px; height: 38px; margin: 1px 3px 0 0; padding-left: 9px; border: 1px solid #18384f; border-radius: 3px; box-shadow: inset 0 0 0 1px rgba(255, 255, 255, .65); background: linear-gradient(135deg, rgba(255, 255, 255, .5), rgba(255, 255, 255, .12) 48%, rgba(255, 255, 255, .06) 52%, rgba(160, 225, 255, .3)); display: flex; }
.task.active { width: 51px; margin-right: 0; padding-left: 5px; background: linear-gradient(135deg, rgba(255, 255, 255, .85), rgba(255, 255, 255, .6) 50%, rgba(255, 255, 255, .45)); }
.edge { width: 4px; height: 38px; margin-top: 1px; border: solid #18384f; border-width: 1px 1px 1px 0; border-radius: 0 3px 3px 0; background: rgba(255, 255, 255, .35); }
.task.acrobat { margin-left: 3px; }
.lang { margin-left: auto; line-height: 36px; }
.clock { display: flex; flex-direction: column; align-items: center; width: 78px; line-height: 17px; padding-top: 4px; margin-right: 2px; }
.desktop { width: 14px; height: 38px; margin: 1px 0 0; border: 1px solid #8fa6bd; background: linear-gradient(160deg, rgba(255, 255, 255, .4), rgba(255, 255, 255, .08) 50%, rgba(0, 0, 0, .1)); }
</style>
